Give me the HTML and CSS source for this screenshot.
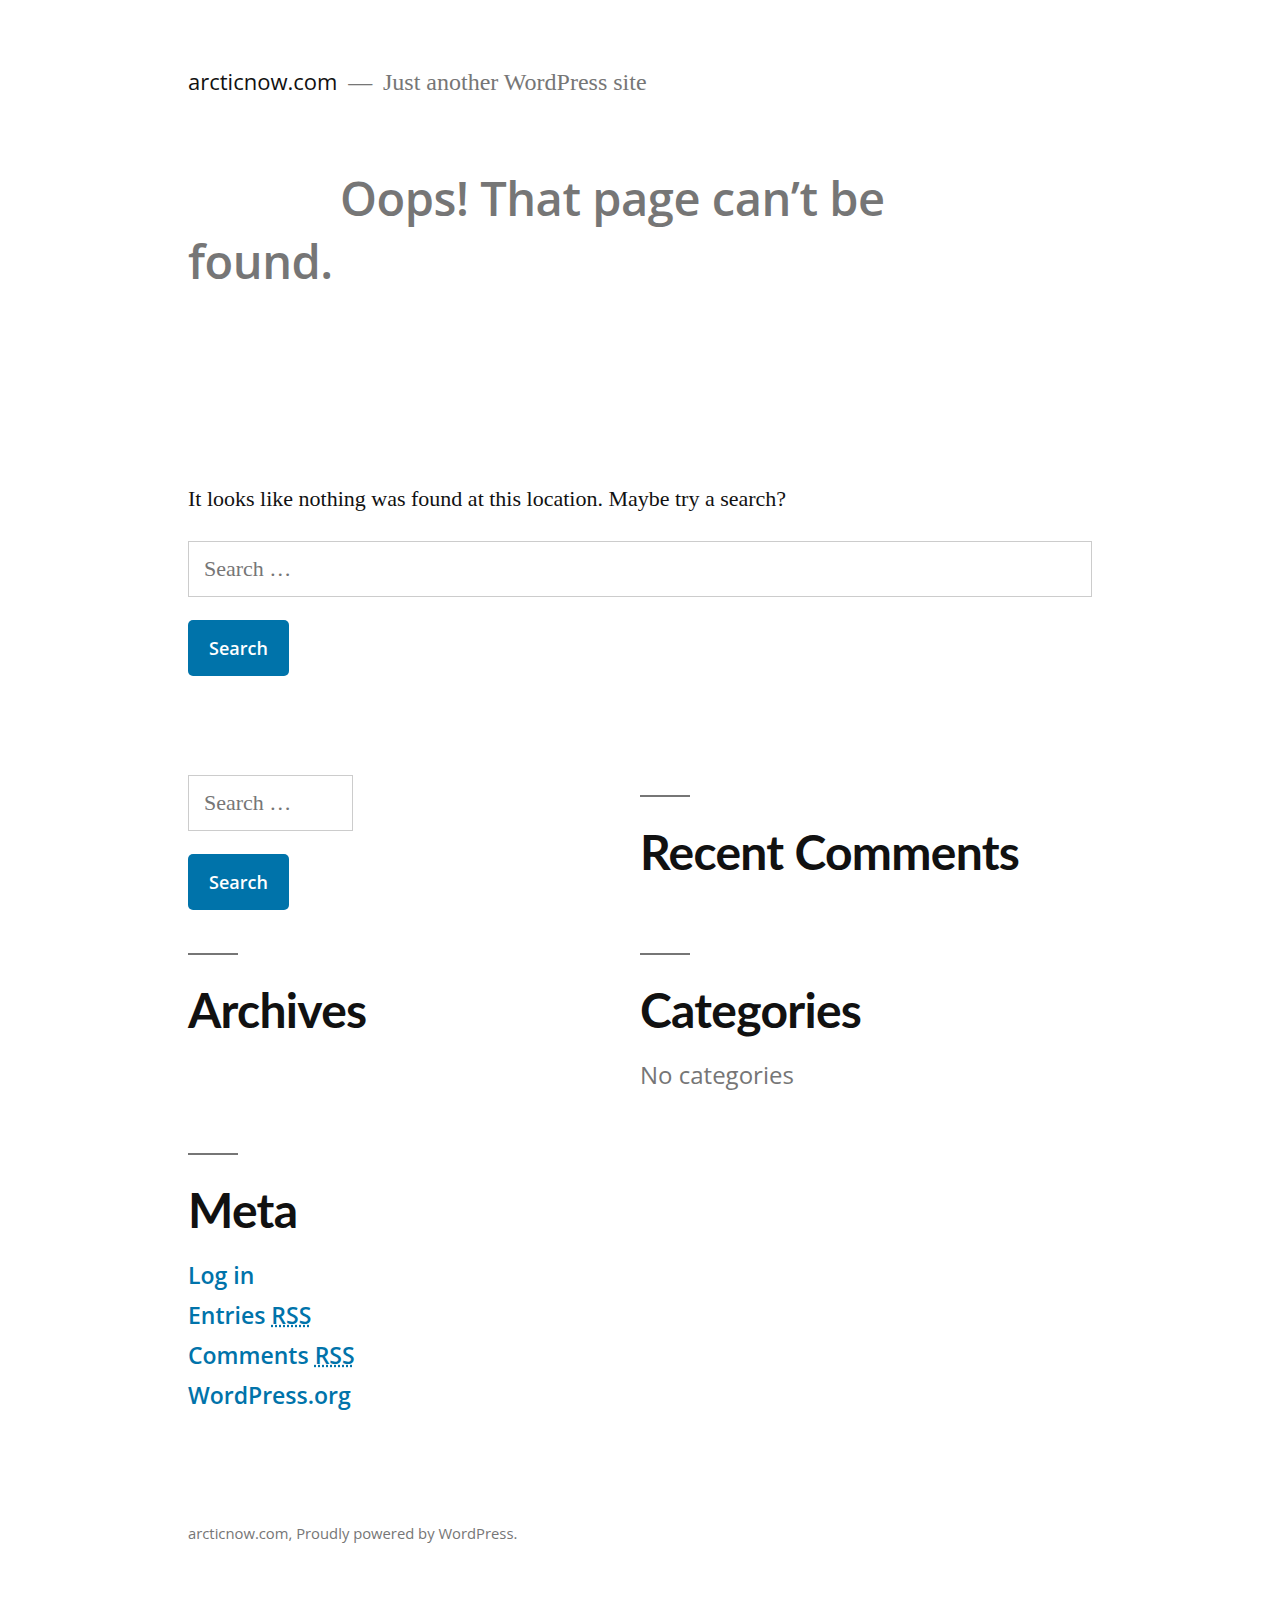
FILE: index.html
```html
<!DOCTYPE html>
<html lang="en">
<head>
  <meta charset="UTF-8" />
  <meta name="viewport" content="width=device-width, initial-scale=1.0"/>
  <title>Page not found – arcticnow.com</title>
  <link rel="stylesheet" href="styles.css">
</head>
<body>

<header class="site-header">
  <p class="site-branding">
    <a class="site-title" href="#">arcticnow.com</a><span class="site-description">Just another WordPress site</span>
  </p>
</header>

<main class="site-main">
  <h1 class="page-title">Oops! That page can’t be found.</h1>

  <div class="page-content">
    <p>It looks like nothing was found at this location. Maybe try a search?</p>

    <form class="search-form" onsubmit="return false">
      <input type="search" class="search-field" placeholder="Search …">
      <button type="submit" class="search-submit">Search</button>
    </form>
  </div>
</main>

<aside class="widget-area">
  <section class="widget widget-search">
    <form class="search-form" onsubmit="return false">
      <input type="search" class="search-field" placeholder="Search …">
      <button type="submit" class="search-submit">Search</button>
    </form>
  </section>

  <section class="widget">
    <h2 class="widget-title">Recent Comments</h2>
  </section>

  <section class="widget">
    <h2 class="widget-title">Archives</h2>
  </section>

  <section class="widget">
    <h2 class="widget-title">Categories</h2>
    <ul>
      <li class="muted">No categories</li>
    </ul>
  </section>

  <section class="widget">
    <h2 class="widget-title">Meta</h2>
    <ul>
      <li><a href="#">Log in</a></li>
      <li><a href="#">Entries <abbr title="Really Simple Syndication">RSS</abbr></a></li>
      <li><a href="#">Comments <abbr title="Really Simple Syndication">RSS</abbr></a></li>
      <li><a href="#">WordPress.org</a></li>
    </ul>
  </section>
</aside>

<footer class="site-footer">
  <a href="#">arcticnow.com</a>, <a href="#">Proudly powered by WordPress</a>.
</footer>

</body>
</html>
```

FILE: styles.css
```css
body {
  margin: 0;
  background: #fff;
  color: #111;
  font-family: "Liberation Serif", "Times New Roman", serif;
  font-size: 22px;
}

.site-header,
.site-main,
.widget-area,
.site-footer {
  padding: 0 calc(10% + 60px);
}

/* header */
.site-header {
  padding-top: 68px;
}

.site-branding {
  margin: 0;
  line-height: 27.5px;
}

.site-title {
  font-family: "Open Sans", sans-serif;
  font-size: 22px;
  color: #111;
  text-decoration: none;
}

.site-description {
  font-size: 24px;
  color: #767676;
}

.site-description::before {
  content: "\2014";
  margin: 0 0.45em;
}

/* 404 content */
.page-title {
  margin: 70px 0 0;
  max-width: 760px;
  font-family: "Open Sans", sans-serif;
  font-size: 47px;
  font-weight: 600;
  line-height: 63px;
  letter-spacing: -0.01em;
  text-indent: 152px;
  color: #767676;
}

.page-content p {
  margin: 188px 0 0;
  line-height: 36px;
}

.search-field {
  display: block;
  box-sizing: border-box;
  width: 100%;
  height: 56px;
  margin-top: 24px;
  padding: 0 15px;
  border: 1px solid #ccc;
  border-radius: 0;
  font-family: "Liberation Serif", serif;
  font-size: 22px;
  color: #111;
  background: #fff;
}

.search-field::placeholder {
  color: #767676;
}

.search-submit {
  display: block;
  margin-top: 23px;
  padding: 15px 21px;
  border: 0;
  border-radius: 5px;
  background: #0073aa;
  color: #fff;
  font-family: "Open Sans", sans-serif;
  font-size: 18px;
  font-weight: 600;
  line-height: 26px;
  cursor: pointer;
}

/* widgets */
.widget-area {
  display: grid;
  grid-template-columns: 1fr 1fr;
  row-gap: 23px;
  margin-top: 99px;
}

.widget-search .search-field {
  width: 165px;
  margin-top: 0;
}

.widget-title {
  margin: 20px 0 0;
  font-family: Lato, sans-serif;
  font-size: 48px;
  font-weight: 700;
  line-height: 55px;
  letter-spacing: -0.015em;
  color: #111;
}

.widget-title::before {
  content: "";
  display: block;
  width: 50px;
  height: 2px;
  margin-bottom: 27px;
  background: #767676;
}

.widget ul {
  list-style: none;
  margin: 18px 0 15px;
  padding: 0;
  font-family: "Open Sans", sans-serif;
  font-size: 23px;
  line-height: 40px;
}

.widget ul a {
  color: #0073aa;
  font-weight: 600;
  text-decoration: none;
}

.widget .muted {
  color: #767676;
  font-size: 24px;
}

abbr[title] {
  text-decoration: underline dotted;
}

/* footer */
.site-footer {
  margin-top: 92px;
  padding-bottom: 60px;
  font-family: "Open Sans", sans-serif;
  font-size: 14.8px;
  line-height: 22.5px;
  color: #767676;
}

.site-footer a {
  color: #767676;
  text-decoration: none;
}
```
